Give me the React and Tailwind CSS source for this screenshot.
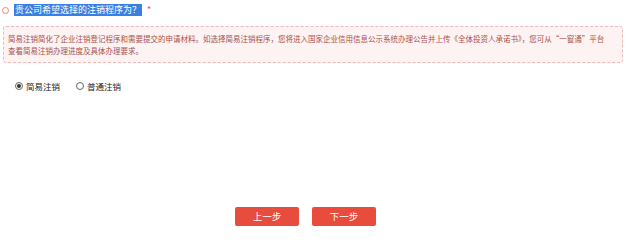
import {useState} from "react";

const FONT = {fontFamily: '"Noto Sans CJK SC", "Microsoft YaHei", sans-serif'};

function Radio({checked, label, onClick}) {
    return (
        <label className="flex items-center gap-[3px] cursor-pointer" onClick={onClick}>
            <span className="w-[8px] h-[8px] rounded-full border border-[#666] bg-white flex items-center justify-center">
                {checked ? <span className="w-[4px] h-[4px] rounded-full bg-[#333]"/> : null}
            </span>
            <span className="text-[8.5px] leading-[12px] text-[#222]">{label}</span>
        </label>
    );
}

export default function App() {
    const [mode, setMode] = useState("simple");

    return (
        <div className="w-[631px] h-[243px] bg-white overflow-hidden" style={FONT}>
            {/* question title */}
            <div className="flex items-center h-[12px] mt-[4px] pl-[2px]">
                <span className="w-[7px] h-[7px] rounded-full border border-[#f0826e] mr-[5px]"/>
                <span className="bg-[#3a7fe3] text-white text-[9px] leading-[12px] px-[1px]">
                    贵公司希望选择的注销程序为？
                </span>
                <span className="text-[#e8505f] text-[9px] leading-[12px] ml-[5px]">*</span>
            </div>

            {/* tip box */}
            <div className="mt-[10px] ml-[3px] mr-[8px] h-[37px] border border-dashed border-[#f0b9b6] rounded-[3px] bg-[#fdf3f3] pl-[4px] pr-[8px] pt-[6px]">
                <p className="text-[7.5px] leading-[12px] text-[#a8524c] whitespace-nowrap">
                    简易注销简化了企业注销登记程序和需要提交的申请材料。如选择简易注销程序，您将进入国家企业信用信息公示系统办理公告并上传《全体投资人承诺书》，您可从“一窗通”平台
                    <br/>
                    查看简易注销办理进度及具体办理要求。
                </p>
            </div>

            {/* options */}
            <div className="flex items-center gap-[16px] mt-[17px] pl-[15px] h-[12px]">
                <Radio checked={mode === "simple"} label="简易注销" onClick={() => setMode("simple")}/>
                <Radio checked={mode === "normal"} label="普通注销" onClick={() => setMode("normal")}/>
            </div>

            {/* actions */}
            <div className="flex justify-center gap-[13px] mt-[115px] pr-[20px]">
                <button className="w-[64px] h-[19px] rounded-[2px] bg-[#e84c3d] text-white text-[9.5px] leading-[19px]">
                    上一步
                </button>
                <button className="w-[64px] h-[19px] rounded-[2px] bg-[#e84c3d] text-white text-[9.5px] leading-[19px]">
                    下一步
                </button>
            </div>
        </div>
    );
}
